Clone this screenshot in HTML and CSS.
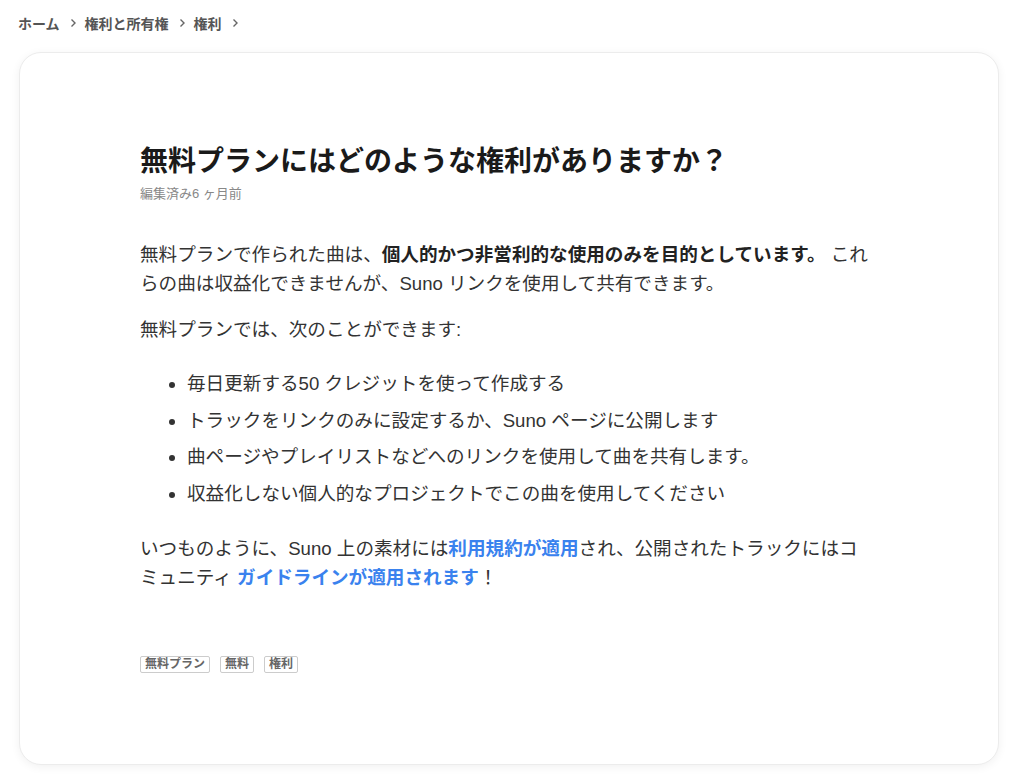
FILE: index.html
```html
<!DOCTYPE html>
<html lang="ja">
<head>
    <meta charset="UTF-8">
    <meta name="viewport" content="width=device-width, initial-scale=1.0">
    <title>無料プランにはどのような権利がありますか？</title>
    <link rel="stylesheet" href="styles.css">
</head>
<body>

<nav class="breadcrumb">
    <a href="#">ホーム</a>
    <svg class="sep" width="8" height="10" viewBox="0 0 8 10"><path d="M2.5 1.5 L6 5 L2.5 8.5" fill="none" stroke="#666" stroke-width="1.4"/></svg>
    <a href="#">権利と所有権</a>
    <svg class="sep" width="8" height="10" viewBox="0 0 8 10"><path d="M2.5 1.5 L6 5 L2.5 8.5" fill="none" stroke="#666" stroke-width="1.4"/></svg>
    <a href="#">権利</a>
    <svg class="sep" width="8" height="10" viewBox="0 0 8 10"><path d="M2.5 1.5 L6 5 L2.5 8.5" fill="none" stroke="#666" stroke-width="1.4"/></svg>
</nav>

<div class="article-card">
    <article class="article">
        <h1>無料プランにはどのような権利がありますか？</h1>
        <div class="meta">編集済み6 ヶ月前</div>

        <div class="article-body">
            <p>無料プランで作られた曲は、<strong>個人的かつ非営利的な使用のみを目的としています。</strong> これらの曲は収益化できませんが、Suno リンクを使用して共有できます。</p>
            <p>無料プランでは、次のことができます:</p>
            <ul>
                <li>毎日更新する50 クレジットを使って作成する</li>
                <li>トラックをリンクのみに設定するか、Suno ページに公開します</li>
                <li>曲ページやプレイリストなどへのリンクを使用して曲を共有します。</li>
                <li>収益化しない個人的なプロジェクトでこの曲を使用してください</li>
            </ul>
            <p>いつものように、Suno 上の素材には<a href="#">利用規約が適用</a>され、公開されたトラックにはコミュニティ <a href="#">ガイドラインが適用されます</a>！</p>
        </div>

        <div class="tags">
            <span class="tag">無料プラン</span>
            <span class="tag">無料</span>
            <span class="tag">権利</span>
        </div>
    </article>
</div>

</body>
</html>
```

FILE: styles.css
```css
html, body {
    margin: 0;
    padding: 0;
    background: #ffffff;
    font-family: 'Liberation Sans', 'Noto Sans CJK JP', sans-serif;
    color: #333333;
}

/* パンくず */
.breadcrumb {
    display: flex;
    align-items: center;
    gap: 9px;
    padding: 12px 18px 0 18px;
    height: 22px;
    font-size: 14px;
    font-weight: bold;
}
.breadcrumb a { color: #555555; text-decoration: none; }
.breadcrumb .sep { margin: 0 -1px 0 0; }

/* 記事カード */
.article-card {
    margin: 18px 25px 17px 19px;
    background: #ffffff;
    border: 1px solid #ececec;
    border-radius: 22px;
    box-shadow: 0 2px 10px rgba(0, 0, 0, 0.06);
    padding: 90px 0 90px 120px;
    min-height: 531px;
}
.article {
    max-width: 734px;
}

h1 {
    font-size: 28px;
    font-weight: bold;
    color: #1a1a1a;
    margin: 0;
    line-height: 38px;
}
.meta { font-size: 13px; color: #888888; margin-top: 2px; }

.article-body {
    margin-top: 38px;
    font-size: 18.6px;
    line-height: 29px;
}
.article-body p { margin: 0 0 17px 0; }
.article-body strong { color: #222222; }
.article-body a { color: #3a82ee; font-weight: bold; text-decoration: none; }

.article-body ul {
    margin: 25px 0 26px 0;
    padding-left: 47px;
}
.article-body li { margin-bottom: 7.5px; }

.tags {
    display: flex;
    gap: 10px;
    margin-top: 64px;
}
.tag {
    font-size: 12px;
    font-weight: bold;
    color: #666666;
    border: 1px solid #cccccc;
    border-radius: 2px;
    padding: 0 4px;
    line-height: 15px;
}
```
